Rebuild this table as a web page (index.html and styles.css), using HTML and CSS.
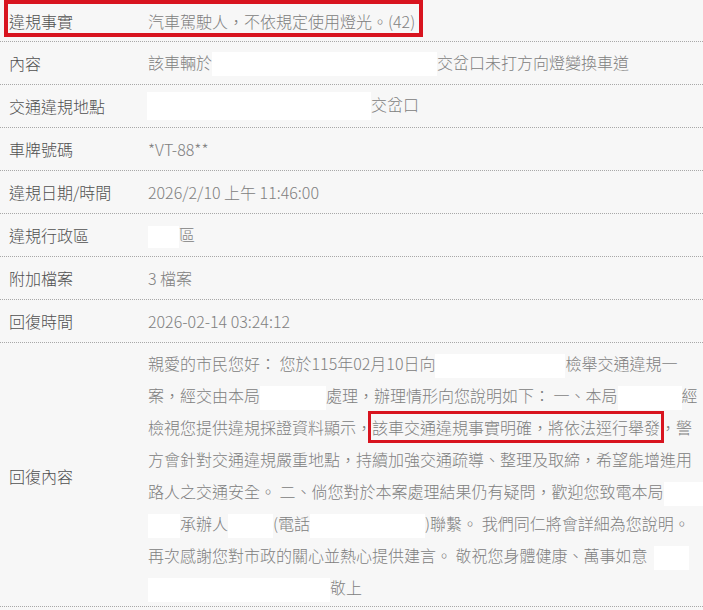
FILE: index.html
```html
<!DOCTYPE html>
<html lang="zh-Hant">
<head>
<meta charset="utf-8">
<title>違規案件</title>
<link rel="stylesheet" href="styles.css">
</head>
<body>
<div class="detail">
  <div class="row row-first">
    <div class="label">違規事實</div>
    <div class="value">汽車駕駛人，不依規定使用燈光。(42)</div>
    <div class="mark"></div>
  </div>
  <div class="row">
    <div class="label">內容</div>
    <div class="value">該車輛於<span class="redact w225"></span>交岔口未打方向燈變換車道</div>
  </div>
  <div class="row">
    <div class="label">交通違規地點</div>
    <div class="value"><span class="redact tall w224 lead"></span>交岔口</div>
  </div>
  <div class="row">
    <div class="label">車牌號碼</div>
    <div class="value">*VT-88**</div>
  </div>
  <div class="row">
    <div class="label">違規日期/時間</div>
    <div class="value">2026/2/10 上午 11:46:00</div>
  </div>
  <div class="row">
    <div class="label">違規行政區</div>
    <div class="value"><span class="redact short w31"></span>區</div>
  </div>
  <div class="row">
    <div class="label">附加檔案</div>
    <div class="value">3 檔案</div>
  </div>
  <div class="row">
    <div class="label">回復時間</div>
    <div class="value">2026-02-14 03:24:12</div>
  </div>
  <div class="row row-reply">
    <div class="label">回復內容</div>
    <div class="value reply">親愛的市民您好： 您於115年02月10日向<span class="redact w130"></span>檢舉交通違規一<br>案，經交由本局<span class="redact w66"></span>處理，辦理情形向您說明如下： 一、本局<span class="redact w64"></span>經<br>檢視您提供違規採證資料顯示，<span class="highlight">該車交通違規事實明確，將依法逕行舉發</span>，警<br>方會針對交通違規嚴重地點，持續加強交通疏導、整理及取締，希望能增進用<br>路人之交通安全。 二、倘您對於本案處理結果仍有疑問，歡迎您致電本局<span class="redact w40"></span><br><span class="redact w32"></span>承辦人<span class="redact w45"></span>(電話<span class="redact w115"></span>)聯繫。 我們同仁將會詳細為您說明。<br>再次感謝您對市政的關心並熱心提供建言。 敬祝您身體健康、萬事如意<span class="redact w35 gap"></span><br><span class="redact w182"></span>敬上</div>
  </div>
</div>
</body>
</html>
```
FILE: styles.css
```css
html, body {
  margin: 0;
  padding: 0;
  background: #f7f7f7;
}
body {
  font-family: "Noto Sans CJK TC", "Noto Sans", sans-serif;
  font-size: 16px;
  font-weight: 300;
  color: #808080;
  overflow: hidden;
}
.detail {
  width: 703px;
}
.row {
  position: relative;
  display: grid;
  grid-template-columns: 148px 1fr;
  align-items: center;
  min-height: 42px;
  border-bottom: 1px dotted #a8a8a8;
}
.row-first {
  min-height: 41px;
}
.label {
  padding-left: 9px;
  color: #505050;
  white-space: nowrap;
}
.value {
  color: #808080;
  white-space: nowrap;
}
.reply {
  line-height: 32px;
  padding: 4px 0 3px;
}
.row-reply .label {
  padding-top: 2px;
}
.mark {
  position: absolute;
  left: 4px;
  top: 0;
  width: 419px;
  height: 37px;
  box-sizing: border-box;
  border: 4px solid #d8141f;
}
.highlight {
  outline: 3px solid #d8141f;
  outline-offset: 1px;
}
.redact {
  display: inline-block;
  height: 24px;
  background: #fff;
  vertical-align: middle;
}
.redact.tall { height: 28px; }
.redact.short { height: 22px; }
.redact.lead { margin-left: -1px; }
.redact.gap { margin-left: 6px; }
.w225 { width: 225px; }
.w224 { width: 224px; }
.w31 { width: 31px; }
.w130 { width: 130px; }
.w66 { width: 66px; }
.w64 { width: 64px; }
.w40 { width: 40px; }
.w32 { width: 32px; }
.w45 { width: 45px; }
.w115 { width: 115px; }
.w35 { width: 35px; }
.w182 { width: 182px; }
```
